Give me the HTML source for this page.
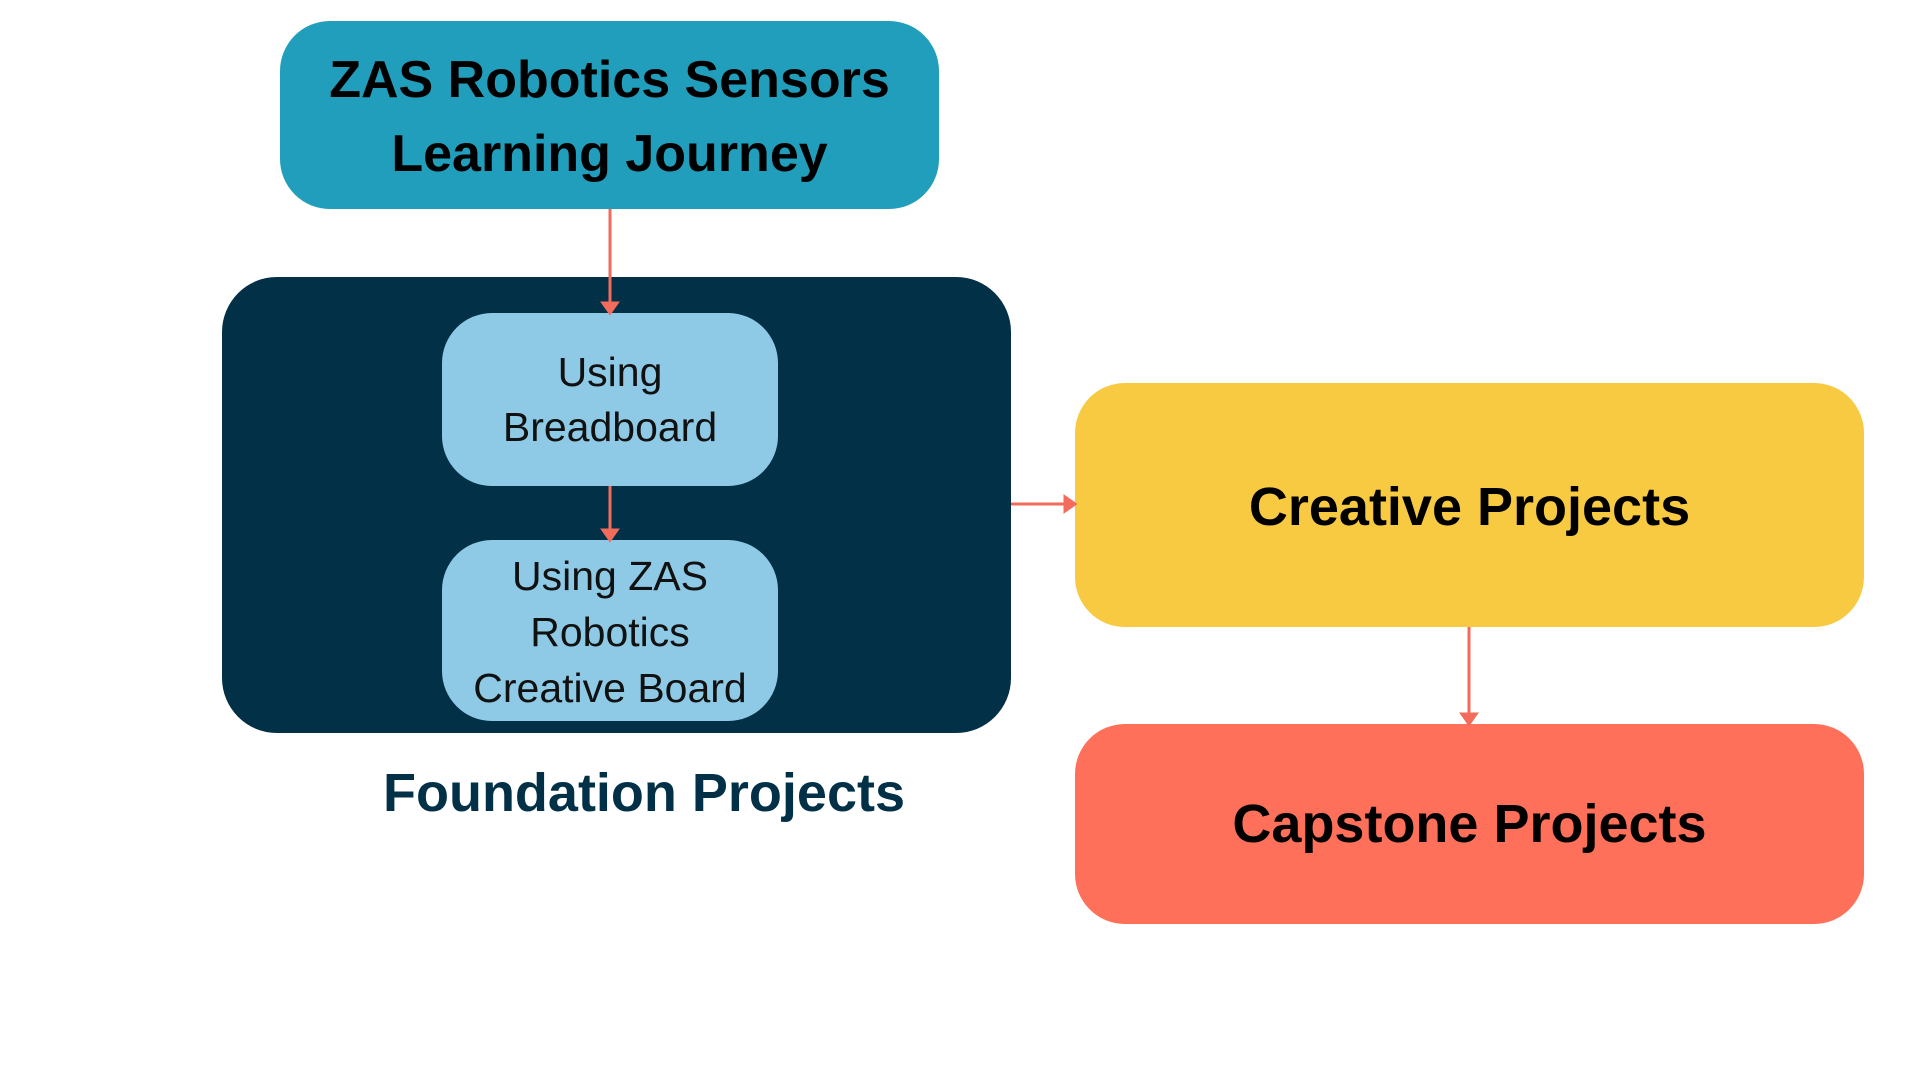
<!DOCTYPE html>
<html><head><style>
body{margin:0;width:1920px;height:1080px;background:#fff;position:relative;overflow:hidden;font-family:"Liberation Sans",sans-serif}
.b{position:absolute;display:flex;align-items:center;justify-content:center;text-align:center;box-sizing:border-box}
</style></head><body>
<div class="b" style="left:280px;top:21px;width:659px;height:188px;border-radius:50px;background:#219ebc;font-weight:bold;font-size:52px;line-height:74px;color:#000;padding-top:4px">ZAS Robotics Sensors<br>Learning Journey</div>
<div class="b" style="left:222px;top:277px;width:789px;height:456px;border-radius:55px;background:#023047"></div>
<div class="b" style="left:442px;top:313px;width:336px;height:173px;border-radius:50px;background:#8ecae6;font-size:41px;line-height:55px;color:#111">Using<br>Breadboard</div>
<div class="b" style="left:442px;top:540px;width:336px;height:181px;border-radius:50px;background:#8ecae6;font-size:41px;line-height:56px;color:#111;padding-top:2px">Using ZAS<br>Robotics<br>Creative Board</div>
<div class="b" style="left:344px;top:760px;width:600px;height:66px;font-weight:bold;font-size:54px;color:#023047">Foundation Projects</div>
<div class="b" style="left:1075px;top:383px;width:789px;height:244px;border-radius:50px;background:#f7ca41;font-weight:bold;font-size:54px;color:#000;padding-top:4px">Creative Projects</div>
<div class="b" style="left:1075px;top:724px;width:789px;height:200px;border-radius:50px;background:#ff705a;font-weight:bold;font-size:54px;color:#000">Capstone Projects</div>
<svg style="position:absolute;left:0;top:0" width="1920" height="1080">
<g stroke="#f26b5b" stroke-width="3" fill="#f26b5b">
<line x1="610" y1="209" x2="610" y2="305"/><polygon points="603,303 617,303 610,313"/>
<line x1="610" y1="486" x2="610" y2="532"/><polygon points="603,530 617,530 610,540"/>
<line x1="1011" y1="504" x2="1067" y2="504"/><polygon points="1065,497 1065,511 1075,504"/>
<line x1="1469" y1="627" x2="1469" y2="716"/><polygon points="1462,714 1476,714 1469,724"/>
</g></svg>
</body></html>
